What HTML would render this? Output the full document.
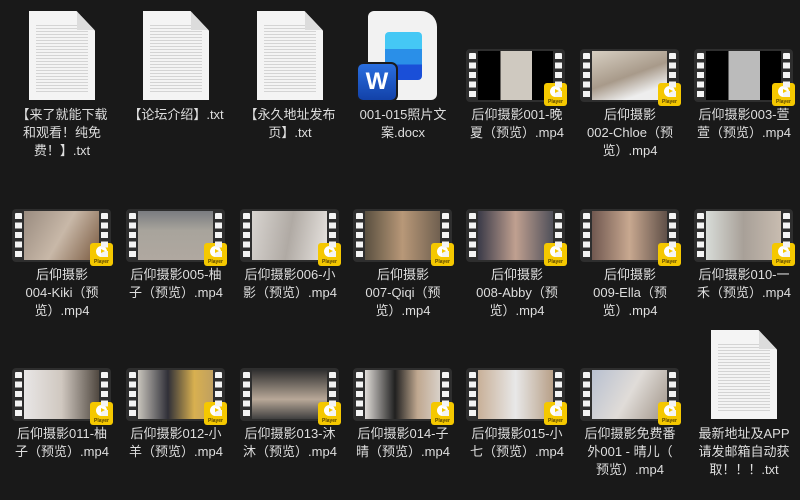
<!DOCTYPE html>
<html><head><meta charset="utf-8"><style>
body{margin:0;width:800px;height:500px;background:#191919;overflow:hidden;position:relative;font-family:"Liberation Sans","Noto Sans CJK SC",sans-serif}
.t{position:absolute;width:112px;text-align:center;color:#dedede;font-size:13px;line-height:18px;white-space:nowrap}
.v{position:absolute;width:99px;height:53px;background:#2e2e2e;border-radius:4px}
.v::before,.v::after{content:"";position:absolute;top:4px;width:7px;height:47px;background:repeating-linear-gradient(#f4f4f4 0 6px,transparent 6px 9.5px);border-radius:1px}
.v::before{left:3px}.v::after{right:3px}
.v .i{position:absolute;left:12px;top:2px;width:75px;height:49px}
.p{position:absolute;right:-2px;bottom:-4px;width:23px;height:23px;background:#f5c800;border-radius:3px}
.p::before{content:"";position:absolute;left:6px;top:3px;width:11px;height:11px;border-radius:50%;background:#fff}
.p::after{content:"Player";position:absolute;left:0;right:0;bottom:1px;font-size:5px;line-height:5px;text-align:center;color:#5a4500;font-weight:bold}
.p i{position:absolute;left:10.5px;top:6px;width:0;height:0;border-left:4px solid #f5c800;border-top:2.5px solid transparent;border-bottom:2.5px solid transparent;z-index:2}
.d{position:absolute;width:66px;height:89px;background:#f4f4f4;clip-path:polygon(0 0,72% 0,100% 22%,100% 100%,0 100%)}
.d::before{content:"";position:absolute;left:7px;right:7px;top:12px;bottom:8px;background:repeating-linear-gradient(transparent 0 2px,#d4d4d4 2px 3px)}
.d::after{content:"";position:absolute;right:0;top:0;width:18px;height:19px;background:linear-gradient(225deg,transparent 50%,#dcdcdc 50%)}
</style></head><body>

<div class="d" style="left:29px;top:11px"></div>
<div class="d" style="left:143px;top:11px"></div>
<div class="d" style="left:257px;top:11px"></div>
<div style="position:absolute;left:368px;top:11px;width:69px;height:89px;background:#f2f2f2;border-radius:6px 16px 6px 6px"></div>
<div style="position:absolute;left:385px;top:32px;width:37px;height:48px;border-radius:4px;background:linear-gradient(#45c8f5 0 35%,#2a8fe8 35% 68%,#1a4fd8 68%)"></div>
<div style="position:absolute;left:356px;top:62px;width:42px;height:40px;border-radius:7px;background:linear-gradient(#2a6fe0,#1241a8);border:2px solid #1a1a1a;box-sizing:border-box;color:#fff;font:bold 24px/36px 'Liberation Sans',sans-serif;text-align:center">W</div>
<div class="d" style="left:711px;top:330px"></div>

<div class="t" style="left:6px;top:106px">【来了就能下载<br>和观看！纯免<br>费！】.txt</div>
<div class="t" style="left:120px;top:106px">【论坛介绍】.txt</div>
<div class="t" style="left:234px;top:106px">【永久地址发布<br>页】.txt</div>
<div class="t" style="left:347px;top:106px">001-015照片文<br>案.docx</div>

<div class="v" style="left:466px;top:49px"><div class="i" style="background:linear-gradient(90deg,#000 0 30%,#cfc9c0 30% 72%,#000 72%)"></div><div class="p"><i></i></div></div>
<div class="v" style="left:580px;top:49px"><div class="i" style="background:linear-gradient(160deg,#d7cfc2,#a89a8a 50%,#eee 80%)"></div><div class="p"><i></i></div></div>
<div class="v" style="left:694px;top:49px"><div class="i" style="background:linear-gradient(90deg,#000 0 30%,#bbb 30% 72%,#000 72%)"></div><div class="p"><i></i></div></div>
<div class="t" style="left:461px;top:106px">后仰摄影001-晚<br>夏（预览）.mp4</div>
<div class="t" style="left:574px;top:106px">后仰摄影<br>002-Chloe（预<br>览）.mp4</div>
<div class="t" style="left:688px;top:106px">后仰摄影003-萱<br>萱（预览）.mp4</div>

<div class="v" style="left:12px;top:209px"><div class="i" style="background:linear-gradient(120deg,#9a8c80,#c8b8a8 50%,#7a5a40)"></div><div class="p"><i></i></div></div>
<div class="v" style="left:126px;top:209px"><div class="i" style="background:linear-gradient(#7a7c80,#a8a49c 40%,#b0a8a0)"></div><div class="p"><i></i></div></div>
<div class="v" style="left:240px;top:209px"><div class="i" style="background:linear-gradient(100deg,#d8d4d0,#b0aaa4 50%,#e8e4e0)"></div><div class="p"><i></i></div></div>
<div class="v" style="left:353px;top:209px"><div class="i" style="background:linear-gradient(90deg,#5a5040,#b89878 50%,#706050)"></div><div class="p"><i></i></div></div>
<div class="v" style="left:466px;top:209px"><div class="i" style="background:linear-gradient(90deg,#3a3a48,#c0a090 50%,#50505a)"></div><div class="p"><i></i></div></div>
<div class="v" style="left:580px;top:209px"><div class="i" style="background:linear-gradient(90deg,#705850,#c8a890 50%,#605048)"></div><div class="p"><i></i></div></div>
<div class="v" style="left:694px;top:209px"><div class="i" style="background:linear-gradient(90deg,#d8dcd8,#a8a098 50%,#c8bcb0)"></div><div class="p"><i></i></div></div>
<div class="t" style="left:6px;top:266px">后仰摄影<br>004-Kiki（预<br>览）.mp4</div>
<div class="t" style="left:120px;top:266px">后仰摄影005-柚<br>子（预览）.mp4</div>
<div class="t" style="left:234px;top:266px">后仰摄影006-小<br>影（预览）.mp4</div>
<div class="t" style="left:347px;top:266px">后仰摄影<br>007-Qiqi（预<br>览）.mp4</div>
<div class="t" style="left:461px;top:266px">后仰摄影<br>008-Abby（预<br>览）.mp4</div>
<div class="t" style="left:574px;top:266px">后仰摄影<br>009-Ella（预<br>览）.mp4</div>
<div class="t" style="left:688px;top:266px">后仰摄影010-一<br>禾（预览）.mp4</div>

<div class="v" style="left:12px;top:368px"><div class="i" style="background:linear-gradient(90deg,#e8e6e6,#d0c8c0 50%,#504840)"></div><div class="p"><i></i></div></div>
<div class="v" style="left:126px;top:368px"><div class="i" style="background:linear-gradient(90deg,#c8c4bc,#303038 40%,#d8b050 75%,#c0a060)"></div><div class="p"><i></i></div></div>
<div class="v" style="left:240px;top:368px"><div class="i" style="background:linear-gradient(#303030,#b8a898 60%,#404040)"></div><div class="p"><i></i></div></div>
<div class="v" style="left:353px;top:368px"><div class="i" style="background:linear-gradient(90deg,#e0dcd8,#202020 40%,#c0a890 70%,#d8d0c8)"></div><div class="p"><i></i></div></div>
<div class="v" style="left:466px;top:368px"><div class="i" style="background:linear-gradient(90deg,#c8b098,#e8e8e8 50%,#b8a088)"></div><div class="p"><i></i></div></div>
<div class="v" style="left:580px;top:368px"><div class="i" style="background:linear-gradient(120deg,#b8c0d0,#e0dcd8 50%,#a09488)"></div><div class="p"><i></i></div></div>
<div class="t" style="left:6px;top:425px">后仰摄影011-柚<br>子（预览）.mp4</div>
<div class="t" style="left:120px;top:425px">后仰摄影012-小<br>羊（预览）.mp4</div>
<div class="t" style="left:234px;top:425px">后仰摄影013-沐<br>沐（预览）.mp4</div>
<div class="t" style="left:347px;top:425px">后仰摄影014-子<br>晴（预览）.mp4</div>
<div class="t" style="left:461px;top:425px">后仰摄影015-小<br>七（预览）.mp4</div>
<div class="t" style="left:574px;top:425px">后仰摄影免费番<br>外001 - 晴儿（<br>预览）.mp4</div>
<div class="t" style="left:688px;top:425px">最新地址及APP<br>请发邮箱自动获<br>取！！！.txt</div>
</body></html>
